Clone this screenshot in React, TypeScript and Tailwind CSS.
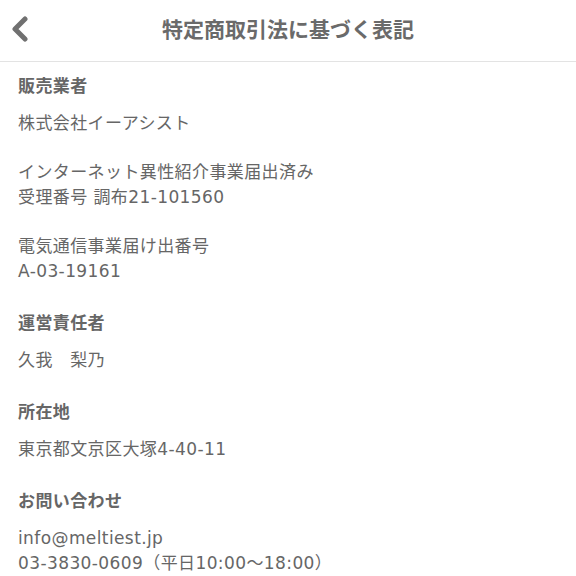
import React from "react";

const sections: { label: string; values: string[][] }[] = [
  {
    label: "販売業者",
    values: [
      ["株式会社イーアシスト"],
      ["インターネット異性紹介事業届出済み", "受理番号 調布21-101560"],
      ["電気通信事業届け出番号", "A-03-19161"],
    ],
  },
  { label: "運営責任者", values: [["久我\u3000梨乃"]] },
  { label: "所在地", values: [["東京都文京区大塚4-40-11"]] },
  {
    label: "お問い合わせ",
    values: [["info@meltiest.jp", "03-3830-0609（平日10:00〜18:00）"]],
  },
];

export default function App() {
  return (
    <div
      className="w-[576px] h-[576px] overflow-hidden bg-white text-[#666]"
      style={{ fontFamily: '"DejaVu Sans", "Noto Sans CJK JP", sans-serif' }}
    >
      {/* HEADER */}
      <div className="relative h-[62px] flex items-center justify-center border-b border-[#e3e3e3]">
        <svg
          className="absolute left-[10px] top-[16px]"
          width="20"
          height="26"
          viewBox="0 0 20 26"
        >
          <path
            d="M15 3 L5 13 L15 23"
            fill="none"
            stroke="#707070"
            strokeWidth="5"
            strokeLinecap="round"
            strokeLinejoin="round"
          />
        </svg>
        <div
          className="text-[21px] font-bold text-[#6a6a6a] -mt-[3px]"
          style={{ fontFamily: '"Noto Sans CJK JP", sans-serif' }}
        >
          特定商取引法に基づく表記
        </div>
      </div>

      {/* CONTENT */}
      <div className="px-[18px] pt-[12px] text-[17px] leading-[25px] tracking-[0.4px]">
        {sections.map((s, i) => (
          <div key={s.label} className={i === 0 ? "" : "mt-[27px]"}>
            <div className="font-bold mb-[12px]">{s.label}</div>
            {s.values.map((v, j) => (
              <div key={j} className={j === 0 ? "" : "mt-[24px]"}>
                {v.map((line) => (
                  <div key={line}>{line}</div>
                ))}
              </div>
            ))}
          </div>
        ))}
      </div>
    </div>
  );
}
